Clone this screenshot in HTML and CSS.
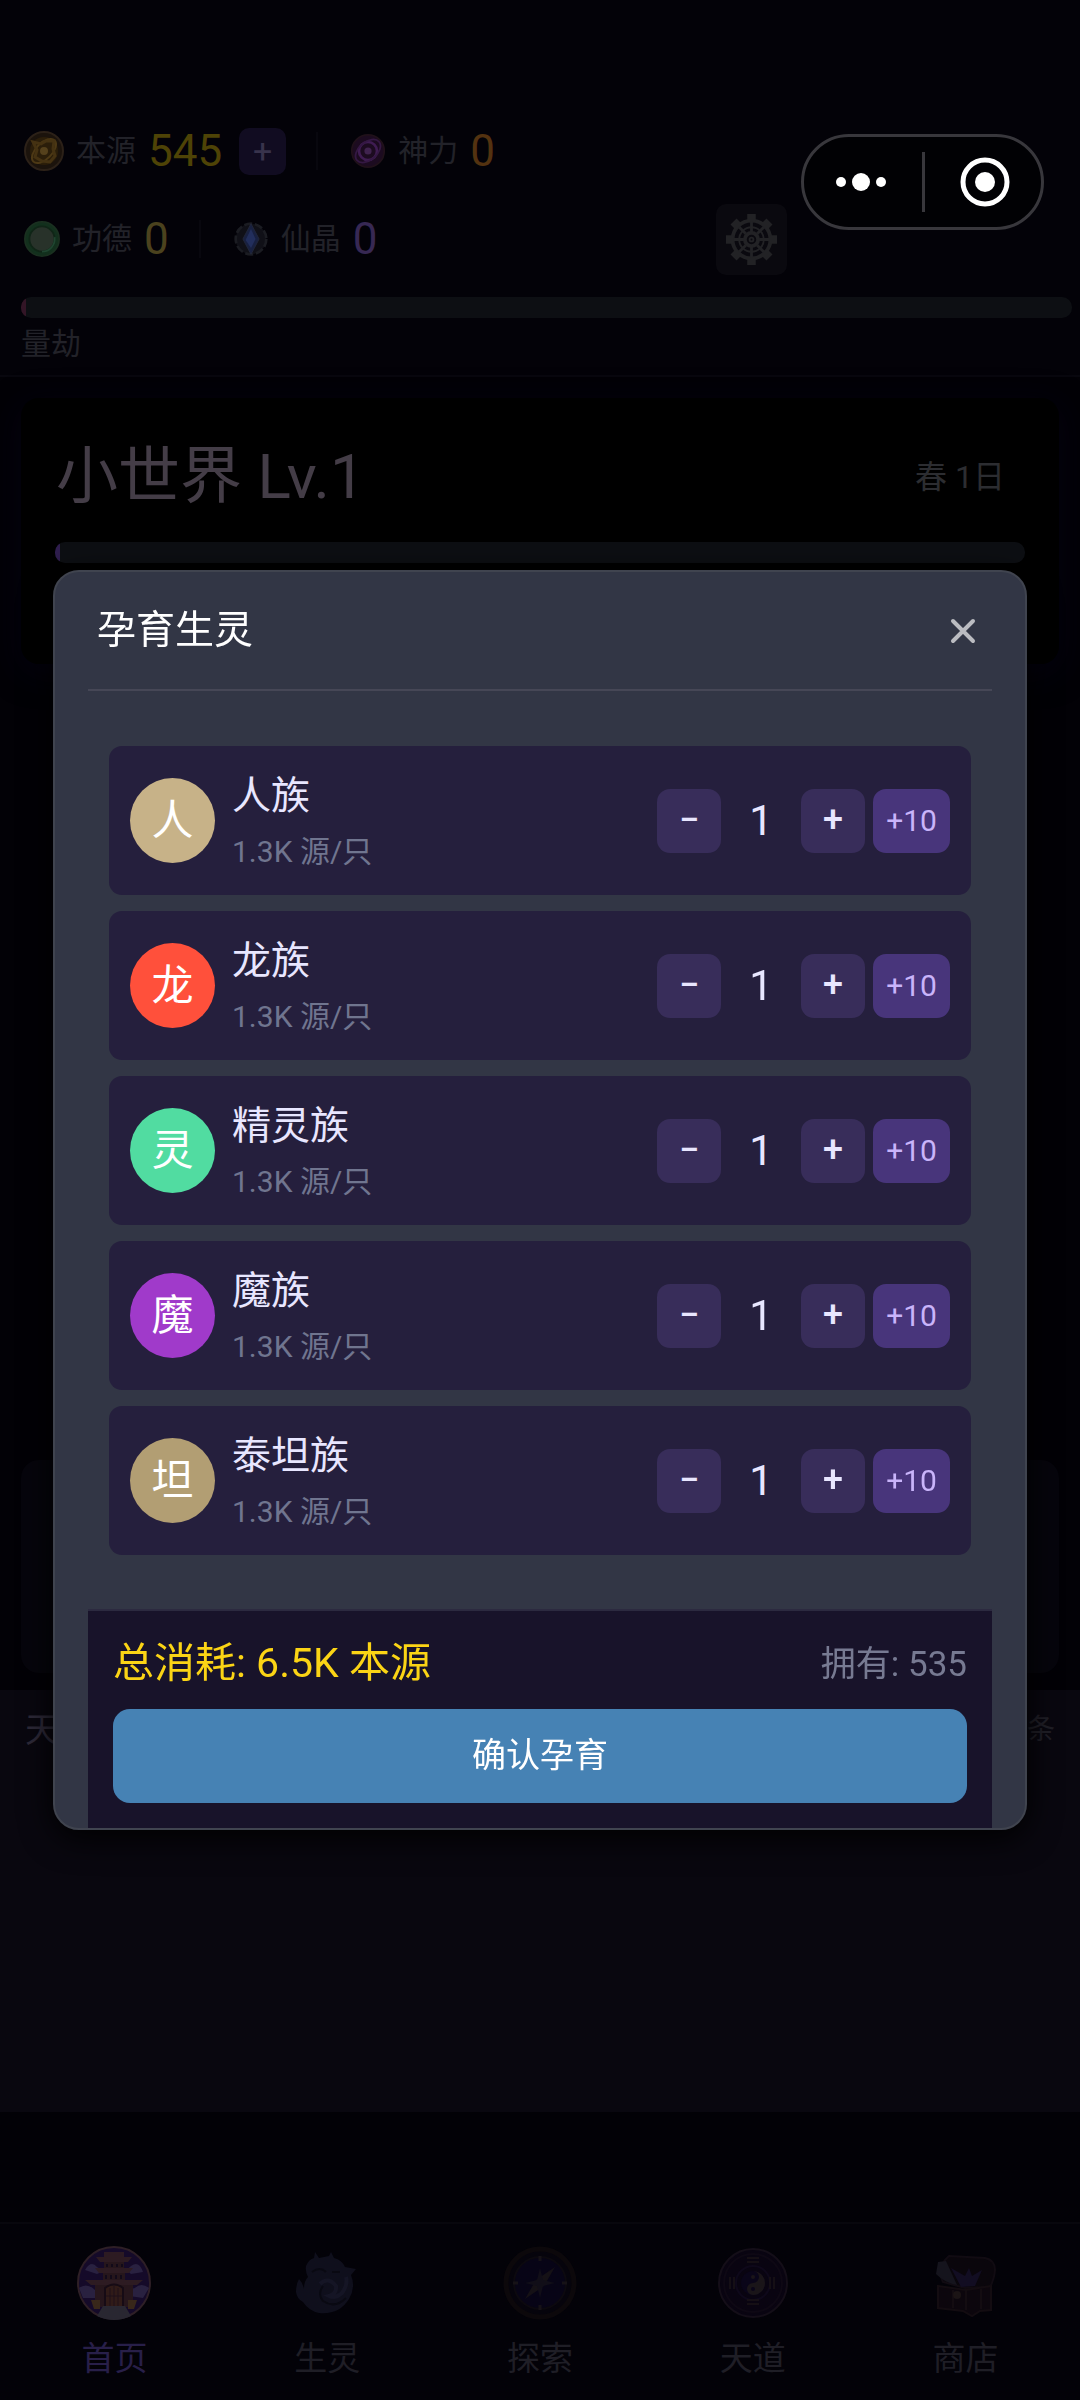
FILE: index.html
```html
<!DOCTYPE html>
<html lang="zh-CN">
<head>
  <meta charset="UTF-8" />
  <meta name="viewport" content="width=device-width, initial-scale=1.0" />
  <title>小世界</title>
  <link rel="stylesheet" href="styles.css">
</head>
<body>
  <header class="topbar">
    <div class="res-row">
      <svg class="res-icon large" viewBox="0 0 40 40">
        <circle cx="20" cy="20" r="19" fill="#1b130c" stroke="#2c2118" stroke-width="2"/>
        <circle cx="20" cy="20" r="14" fill="#2b1e0a"/>
        <ellipse cx="20" cy="20" rx="15" ry="8" fill="none" stroke="#4d3915" stroke-width="2" transform="rotate(-45 20 20)"/>
        <path d="M9 11l8 2 5-3 8 0-1 8 2 7-5 6-8-1-7-4 2-7z" fill="none" stroke="#453212" stroke-width="3"/>
        <circle cx="20" cy="20" r="4" fill="#55411c"/>
      </svg>
      <span class="res-label">本源</span>
      <span class="res-value gold">545</span>
      <button class="add-btn" aria-label="增加本源">+</button>
      <i class="res-divider"></i>
      <svg class="res-icon" viewBox="0 0 40 40">
        <circle cx="20" cy="20" r="18" fill="#1c0b20" stroke="#20111a" stroke-width="2"/>
        <circle cx="20" cy="20" r="10" fill="none" stroke="#3f1c52" stroke-width="3"/>
        <ellipse cx="20" cy="20" rx="16" ry="10" fill="none" stroke="#341843" stroke-width="2" transform="rotate(-40 20 20)"/>
        <circle cx="20" cy="20" r="4" fill="#40234f"/>
      </svg>
      <span class="res-label">神力</span>
      <span class="res-value orange">0</span>
    </div>
    <div class="res-row">
      <svg class="res-icon" viewBox="0 0 40 40">
        <circle cx="20" cy="20" r="19" fill="#12301d" stroke="#1a3020" stroke-width="2"/>
        <circle cx="20" cy="20" r="14" fill="#28322a" stroke="#102517" stroke-width="2"/>
        <path d="M34 18a14 14 0 0 1-14 16" fill="none" stroke="#1f4530" stroke-width="2"/>
      </svg>
      <span class="res-label">功德</span>
      <span class="res-value olive">0</span>
      <i class="res-divider"></i>
      <svg class="res-icon" viewBox="0 0 40 40">
        <circle cx="20" cy="20" r="17" fill="#101017" stroke="#1b1c22" stroke-width="3" stroke-dasharray="9 3"/>
        <path d="M20 3l9 17-9 17-9-17z" fill="#182040" stroke="#22273a" stroke-width="1"/>
        <path d="M20 9l5 11-5 10-6-9z" fill="#222e5c"/>
      </svg>
      <span class="res-label">仙晶</span>
      <span class="res-value violet">0</span>
      <button class="settings-btn" aria-label="设置">
        <svg viewBox="0 0 56 56" fill="none" stroke="#222225">
          <circle cx="28" cy="28" r="20" stroke-width="4"/>
          <circle cx="28" cy="28" r="13" stroke-width="2"/>
          <circle cx="28" cy="28" r="7" stroke-width="4"/>
          <circle cx="28" cy="28" r="2" stroke-width="2"/>
          <path d="M28 8v12M28 36v12M8 28h12M36 28h12M14 14l8 8M34 34l8 8M42 14l-8 8M22 34l-8 8" stroke-width="3"/>
          <path d="M28 1v8M28 47v8M1 28h8M47 28h8M9 9l6 6M41 41l6 6M47 9l-6 6M15 41l-6 6" stroke-width="9"/>
        </svg>
      </button>
    </div>
    <div class="bar calamity"><div class="bar-fill"></div></div>
    <div class="calamity-label">量劫</div>
  </header>

  <main>
    <section class="world-card">
      <div class="world-head">
        <h1>小世界 Lv.1</h1>
        <span class="date">春 1日</span>
      </div>
      <div class="bar world"><div class="bar-fill"></div></div>
    </section>
    <section class="action-card"></section>
  </main>

  <section class="log-panel">
    <span class="log-title">天道</span>
    <span class="log-count">条</span>
  </section>

  <nav class="tabbar">
    <a href="#" class="active">
      <svg viewBox="0 0 74 74">
        <circle cx="37" cy="37" r="36" fill="#150a29" stroke="#2e1f26" stroke-width="2"/>
        <path d="M2 42q8-6 16 2 8 0 4 8H6zM72 42q-8-6-14 0-10 2-6 8l14 2zM8 24q6-10 12-3 8 4 0 7zM66 26q-4-12-12-6-6 4 0 8z" fill="#292140"/>
        <path d="M27 6h20v5h8l-4 5H23l-4-5h8zM18 22h38l-4 5H22zM8 34h58l-6 5H14z" fill="#2d1b22"/>
        <path d="M27 16h20v6H27zM26 27h22v7H26zM18 39h38v22H18z" fill="#26161c"/>
        <path d="M30 18v3M35 18v3M40 18v3M45 18v3M29 29v4M34 29v4M39 29v4M44 29v4" stroke="#120a19" stroke-width="2"/>
        <path d="M28 61V42q9-7 18 0v19z" fill="#301b18" stroke="#160b15" stroke-width="2"/>
        <path d="M33 42v18M37 40v20M41 42v18M29 50h16" stroke="#1e1118" stroke-width="1"/>
        <path d="M26 60h22l6 10q-17 8-34 0z" fill="#292731"/>
        <path d="M14 54h9v9h-6zM51 54h9l-3 9h-6z" fill="#38271a"/>
      </svg>
      <span>首页</span>
    </a>
    <a href="#">
      <svg viewBox="0 0 74 74">
        <path d="M16 20q3-7 8-8l1-6 4 6 10-2 2-4 3 6q8 2 11 9l11 2-5 6q5 12-2 24-10 16-30 14-10-2-16-11-6-3-7-10 0-8 3-13 4 4 5 10 0-8 4-12-3-6-2-11z" fill="#0f0f1c"/>
        <path d="M30 38q8-8 16 2 1 8-7 10 6 3 13-3 6-8 4-16" fill="none" stroke="#151525" stroke-width="4"/>
        <path d="M33 40q-6 8 0 15 12 8 23-3M22 26q8-6 14 0M42 26h8" fill="none" stroke="#090912" stroke-width="2"/>
      </svg>
      <span>生灵</span>
    </a>
    <a href="#">
      <svg viewBox="0 0 74 74">
        <circle cx="37" cy="37" r="34" fill="#06040c" stroke="#0c080b" stroke-width="5"/>
        <circle cx="37" cy="37" r="26" fill="#070416" stroke="#0c090f" stroke-width="2"/>
        <path d="M52 21L41 40 22 53l11-19z" fill="#151116"/>
        <path d="M37 22l3 12 12 3-12 3-3 12-3-12-12-3 12-3z" fill="#110e18"/>
        <path d="M37 10v5M37 59v5M10 37h5M59 37h5" stroke="#161217" stroke-width="3"/>
      </svg>
      <span>探索</span>
    </a>
    <a href="#">
      <svg viewBox="0 0 74 74">
        <circle cx="37" cy="37" r="34" fill="#090411" stroke="#140e18" stroke-width="2"/>
        <circle cx="37" cy="37" r="29" fill="none" stroke="#0e0814" stroke-width="2"/>
        <circle cx="37" cy="37" r="17" fill="none" stroke="#0e081a" stroke-width="2"/>
        <circle cx="37" cy="37" r="12" fill="#0a0519"/>
        <path d="M37 25a12 12 0 0 1 0 24 6 6 0 0 1 0-12 6 6 0 0 0 0-12z" fill="#1a1519"/>
        <circle cx="37" cy="31" r="2" fill="#1a1519"/>
        <circle cx="37" cy="43" r="2" fill="#0a0519"/>
        <path d="M31 12h12M31 16h12M31 54h12M31 58h12M14 31v12M18 31v12M54 31v12M58 31v12" stroke="#150f15" stroke-width="2"/>
      </svg>
      <span>天道</span>
    </a>
    <a href="#">
      <svg viewBox="0 0 74 74">
        <path d="M20 10l36 2q10 2 10 12-1 10-5 17L36 42 14 36q-8-14 6-26z" fill="#0a060c" stroke="#110b12" stroke-width="2"/>
        <path d="M9 40l28 4 25-4v24l-11 1-8 5-9-5-25-3z" fill="#0c060d" stroke="#130c11" stroke-width="2"/>
        <path d="M9 16l8-1 11 24q-12-2-21-11z" fill="#15141d"/>
        <path d="M22 22l14 8 4-8 3 8 10-6-7 16-14 1z" fill="#120d22"/>
        <path d="M24 44v18M37 44v20M52 43v20" stroke="#130c11" stroke-width="2"/>
        <circle cx="28" cy="49" r="4" fill="#1b1415"/>
      </svg>
      <span>商店</span>
    </a>
  </nav>

  <div class="overlay">
    <div class="modal" role="dialog" aria-labelledby="modalTitle">
      <div class="modal-head">
        <h2 id="modalTitle">孕育生灵</h2>
        <button class="close-btn" aria-label="关闭">
          <svg viewBox="0 0 26 26"><path d="M3 3l20 20M23 3L3 23" stroke="#bbbcc1" stroke-width="4" stroke-linecap="round"/></svg>
        </button>
      </div>

      <div class="race-list">
        <div class="race">
          <div class="avatar human">人</div>
          <div class="race-info">
            <div class="race-name">人族</div>
            <div class="race-cost">1.3K 源/只</div>
          </div>
          <div class="stepper">
            <button class="step">−</button>
            <input class="qty" type="text" value="1" aria-label="人族数量">
            <button class="step">+</button>
            <button class="step-ten">+10</button>
          </div>
        </div>
        <div class="race">
          <div class="avatar dragon">龙</div>
          <div class="race-info">
            <div class="race-name">龙族</div>
            <div class="race-cost">1.3K 源/只</div>
          </div>
          <div class="stepper">
            <button class="step">−</button>
            <input class="qty" type="text" value="1" aria-label="龙族数量">
            <button class="step">+</button>
            <button class="step-ten">+10</button>
          </div>
        </div>
        <div class="race">
          <div class="avatar elf">灵</div>
          <div class="race-info">
            <div class="race-name">精灵族</div>
            <div class="race-cost">1.3K 源/只</div>
          </div>
          <div class="stepper">
            <button class="step">−</button>
            <input class="qty" type="text" value="1" aria-label="精灵族数量">
            <button class="step">+</button>
            <button class="step-ten">+10</button>
          </div>
        </div>
        <div class="race">
          <div class="avatar demon">魔</div>
          <div class="race-info">
            <div class="race-name">魔族</div>
            <div class="race-cost">1.3K 源/只</div>
          </div>
          <div class="stepper">
            <button class="step">−</button>
            <input class="qty" type="text" value="1" aria-label="魔族数量">
            <button class="step">+</button>
            <button class="step-ten">+10</button>
          </div>
        </div>
        <div class="race">
          <div class="avatar titan">坦</div>
          <div class="race-info">
            <div class="race-name">泰坦族</div>
            <div class="race-cost">1.3K 源/只</div>
          </div>
          <div class="stepper">
            <button class="step">−</button>
            <input class="qty" type="text" value="1" aria-label="泰坦族数量">
            <button class="step">+</button>
            <button class="step-ten">+10</button>
          </div>
        </div>
      </div>

      <div class="modal-foot">
        <div class="totals">
          <span class="total">总消耗: 6.5K 本源</span>
          <span class="owned">拥有: 535</span>
        </div>
        <button class="confirm-btn">确认孕育</button>
      </div>
    </div>
  </div>

  <div class="capsule">
    <button aria-label="更多">
      <svg viewBox="0 0 56 56" fill="#fff"><circle cx="8" cy="28" r="5"/><circle cx="28" cy="28" r="9"/><circle cx="48" cy="28" r="5"/></svg>
    </button>
    <i></i>
    <button aria-label="退出">
      <svg viewBox="0 0 56 56"><circle cx="28" cy="28" r="22" fill="none" stroke="#fff" stroke-width="5"/><circle cx="28" cy="28" r="10" fill="#fff"/></svg>
    </button>
  </div>
</body>
</html>
```

FILE: styles.css
```css
* {
  box-sizing: border-box;
}

body {
  margin: 0;
  min-height: 100vh;
  display: flex;
  flex-direction: column;
  background-color: #020106;
  color: #e8e6ff;
  font-family: Roboto, "Noto Sans CJK SC", sans-serif;
  font-size: 30px;
  line-height: 1.4;
}

button, input {
  margin: 0;
  padding: 0;
  border: none;
  background: none;
  color: inherit;
  font: inherit;
}

button {
  cursor: pointer;
}

svg {
  display: block;
}

h1, h2 {
  margin: 0;
  font-weight: 400;
}

/* top resources */
.topbar {
  padding: 115px 8px 10px 21px;
  background-color: #030208;
  border-bottom: 2px solid #08070e;
}

.res-row {
  display: flex;
  align-items: center;
  height: 72px;
  padding-left: 3px;
}

.res-row + .res-row {
  margin-top: 16px;
}

.res-icon {
  width: 36px;
  height: 36px;
}

.res-icon.large {
  width: 40px;
  height: 40px;
}

.res-label {
  margin-left: 12px;
  color: #222229;
}

.res-value {
  margin-left: 12px;
  font-size: 44px;
  line-height: 48px;
}

.gold { color: #4e4306; }
.orange { color: #533210; }
.olive { color: #4b421e; }
.violet { color: #372853; }

.add-btn {
  width: 47px;
  height: 47px;
  margin-left: 17px;
  border-radius: 10px;
  background-color: #110c21;
  color: #38334c;
  font-size: 34px;
  line-height: 47px;
}

.res-divider {
  width: 2px;
  height: 38px;
  margin: 0 32px 0 30px;
  background-color: #08070e;
}

.settings-btn {
  width: 71px;
  height: 71px;
  margin-left: auto;
  margin-right: 285px;
  padding: 9px;
  border-radius: 10px;
  background-color: #0a090f;
}

.bar {
  height: 21px;
  border-radius: 10px;
  background-color: #0d0f13;
  overflow: hidden;
}

.bar-fill {
  width: 5px;
  height: 100%;
}

.calamity {
  margin-top: 22px;
}

.calamity .bar-fill {
  background-color: #331526;
}

.calamity-label {
  margin-top: 5px;
  line-height: 42px;
  color: #222229;
}

/* world */
main {
  flex: 1;
  display: flex;
  flex-direction: column;
  justify-content: space-between;
  padding: 21px 21px 17px;
}

.world-card {
  height: 266px;
  padding: 40px 34px 0;
  border-radius: 18px;
  background-color: #000;
  box-shadow: 0 8px 32px #040310;
}

.world-head {
  display: flex;
  justify-content: space-between;
  align-items: center;
  height: 78px;
  padding: 0 20px 0 1px;
}

.world-head h1 {
  font-size: 62px;
  line-height: 80px;
  color: #443d47;
}

.date {
  font-size: 32px;
  color: #2c2d31;
}

.world {
  margin-top: 26px;
}

.world .bar-fill {
  background-color: #2f1e4e;
}

.action-card {
  height: 213px;
  border-radius: 18px;
  background-color: #06050c;
}

.log-panel {
  display: flex;
  justify-content: space-between;
  height: 422px;
  margin-bottom: 110px;
  padding: 16px 25px;
  background-color: #09070f;
  line-height: 48px;
}

.log-title {
  font-size: 34px;
  color: #2d2938;
}

.log-count {
  font-size: 28px;
  color: #201f27;
}

/* bottom tabs */
.tabbar {
  display: flex;
  height: 178px;
  padding: 22px 8px 0;
  background-color: #030208;
  border-top: 2px solid #08070d;
}

.tabbar a {
  flex: 1;
  display: flex;
  flex-direction: column;
  align-items: center;
  color: #1f1e26;
  font-size: 33px;
  line-height: 48px;
  text-decoration: none;
}

.tabbar svg {
  width: 74px;
  height: 74px;
  margin-bottom: 15px;
}

.tabbar .active {
  color: #281f49;
}

/* modal */
.overlay {
  position: fixed;
  inset: 0;
  display: flex;
  align-items: center;
  justify-content: center;
  padding: 0 53px;
}

.modal {
  flex: 1;
  padding: 0 33px;
  border: 2px solid #40444f;
  border-radius: 26px;
  background-color: #323645;
  box-shadow: 0 8px 32px #000;
}

.modal-head {
  display: flex;
  align-items: center;
  justify-content: space-between;
  height: 119px;
  padding: 0 16px 0 9px;
  border-bottom: 2px solid #464756;
}

.modal-head h2 {
  font-size: 39px;
  color: #fff;
}

.close-btn svg {
  width: 26px;
  height: 26px;
}

.race-list {
  display: flex;
  flex-direction: column;
  gap: 16px;
  padding: 55px 21px 54px;
}

.race {
  display: flex;
  align-items: center;
  height: 149px;
  padding: 0 21px;
  border-radius: 13px;
  background-color: #251f3d;
}

.avatar {
  width: 85px;
  height: 85px;
  margin-right: 17px;
  border-radius: 50%;
  color: #fff;
  font-size: 42px;
  line-height: 85px;
  text-align: center;
}

.human { background-color: #c7b288; }
.dragon { background-color: #ff503b; }
.elf { background-color: #51dca1; }
.demon { background-color: #a03aca; }
.titan { background-color: #b29e73; }

.race-info {
  flex: 1;
  padding-top: 6px;
}

.race-name {
  font-size: 39px;
  line-height: 56px;
}

.race-cost {
  line-height: 56px;
  color: #70758f;
}

.stepper {
  display: flex;
  gap: 8px;
}

.step, .step-ten, .qty {
  width: 64px;
  height: 64px;
  border-radius: 13px;
  text-align: center;
}

.step {
  background-color: #382d5a;
  font-size: 36px;
  font-weight: 500;
}

.qty {
  font-size: 42px;
}

.step-ten {
  width: 77px;
  background-color: #48357b;
  color: #c9b4fa;
}

.modal-foot {
  padding: 25px;
  border-top: 2px solid #2c2a40;
  background-color: #18132a;
}

.totals {
  display: flex;
  align-items: center;
  justify-content: space-between;
  height: 56px;
  margin-bottom: 17px;
}

.total {
  font-size: 41px;
  color: #fbd415;
}

.owned {
  font-size: 35px;
  color: #777a92;
}

.confirm-btn {
  width: 100%;
  height: 94px;
  border-radius: 17px;
  background-color: #4682b4;
  color: #fff;
  font-size: 34px;
}

/* mini program capsule */
.capsule {
  position: absolute;
  top: 134px;
  right: 36px;
  display: flex;
  align-items: center;
  justify-content: space-between;
  width: 243px;
  height: 96px;
  padding: 0 28px 0 29px;
  border: 3px solid #38373c;
  border-radius: 48px;
  background-color: #010104;
}

.capsule i {
  width: 3px;
  height: 60px;
  background-color: #38373c;
}

.capsule svg {
  width: 56px;
  height: 56px;
}
```
